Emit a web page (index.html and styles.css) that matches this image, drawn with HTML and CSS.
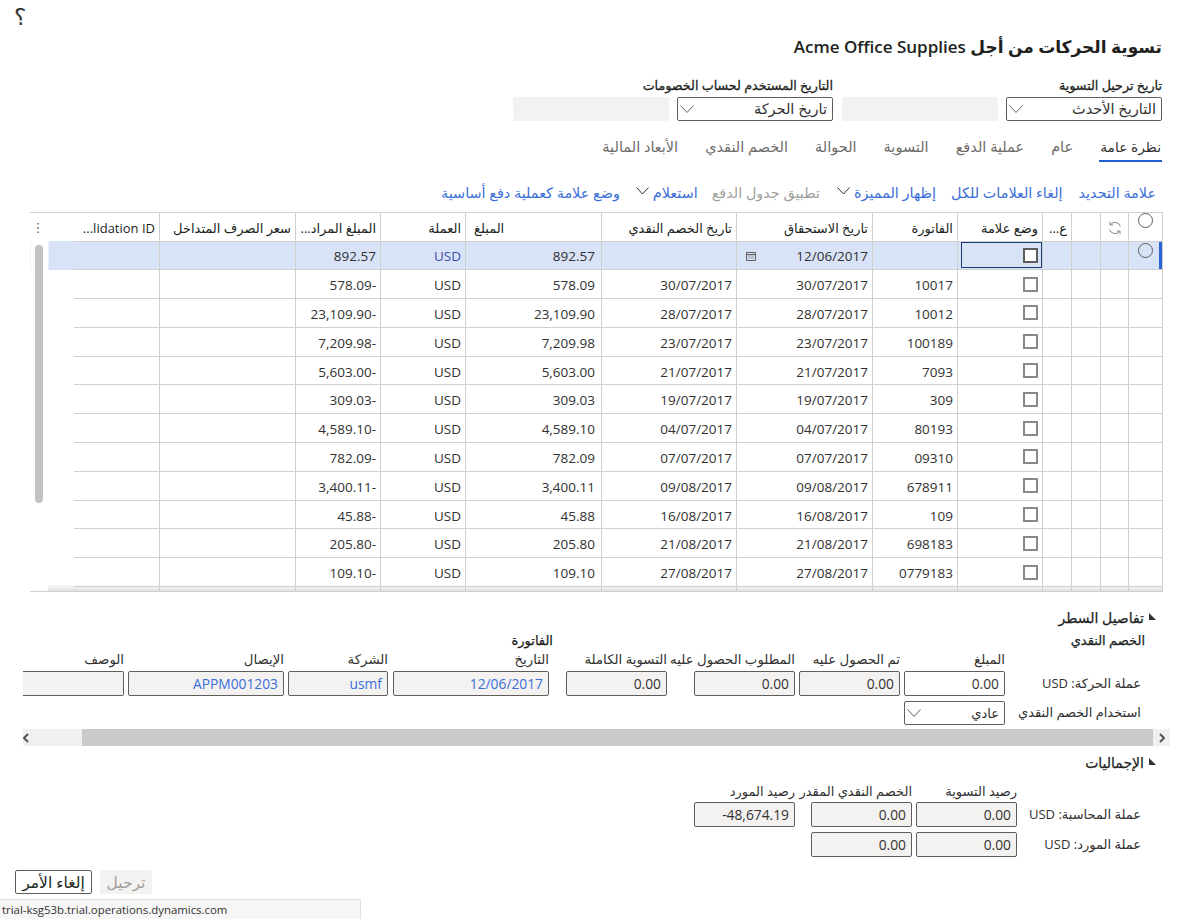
FILE: index.html
```html
<!DOCTYPE html>
<html lang="ar" dir="rtl">
<head>
<meta charset="utf-8">
<title>تسوية الحركات</title>
<link rel="stylesheet" href="styles.css">
</head>
<body>
<div class="help">؟</div>
<h1 class="title">تسوية الحركات من أجل Acme Office Supplies</h1>

<div class="top-form">
  <label class="top-label">تاريخ ترحيل التسوية</label>
  <label class="top-label">التاريخ المستخدم لحساب الخصومات</label>
  <div class="select"><span>التاريخ الأحدث</span><svg class="chev" viewBox="0 0 14 8"><path d="M.5.5L7 7.500 13.500.5"/></svg></div>
  <div class="blank"></div>
  <div class="select"><span>تاريخ الحركة</span><svg class="chev" viewBox="0 0 14 8"><path d="M.5.5L7 7.500 13.500.5"/></svg></div>
  <div class="blank"></div>
</div>

<nav class="tabs">
  <span class="tab active">نظرة عامة</span>
  <span class="tab">عام</span>
  <span class="tab">عملية الدفع</span>
  <span class="tab">التسوية</span>
  <span class="tab">الحوالة</span>
  <span class="tab">الخصم النقدي</span>
  <span class="tab">الأبعاد المالية</span>
</nav>

<div class="toolbar">
  <span class="act a1">علامة التحديد</span>
  <span class="act a2">إلغاء العلامات للكل</span>
  <span class="act a3">إظهار المميزة<svg class="tchev" viewBox="0 0 13 8"><path d="M.5.5l6 6.500 6-6.500"/></svg></span>
  <span class="act a4 off">تطبيق جدول الدفع</span>
  <span class="act a5">استعلام<svg class="tchev" viewBox="0 0 13 8"><path d="M.5.5l6 6.500 6-6.500"/></svg></span>
  <span class="act">وضع علامة كعملية دفع أساسية</span>
</div>

<div class="grid-wrap">
  <table class="grid">
    <colgroup>
      <col class="c34"><col class="c28"><col class="c29"><col class="c29"><col class="c85"><col class="c85"><col class="c136"><col class="c135"><col class="c136"><col class="c85"><col class="c85"><col class="c136"><col class="c86"><col class="c44">
    </colgroup>
    <thead>
      <tr>
        <th class="ctr"><span class="radio up"></span></th>
        <th class="ctr"><svg class="sync" viewBox="0 0 16 16"><path d="M13.5 6.5A5.800 5.800 0 0 0 3.400 4.600M2.500 9.500a5.800 5.800 0 0 0 10.100 1.900"/><path d="M3 1.800v3.100h3.100M13 14.200v-3.100H9.900"/></svg></th>
        <th></th>
        <th>ع...</th>
        <th>وضع علامة</th>
        <th>الفاتورة</th>
        <th>تاريخ الاستحقاق</th>
        <th>تاريخ الخصم النقدي</th>
        <th class="lft">المبلغ</th>
        <th>العملة</th>
        <th>المبلغ المراد...</th>
        <th>سعر الصرف المتداخل</th>
        <th>lidation ID...</th>
        <th class="dots-cell"><span class="dots">⋮</span></th>
      </tr>
    </thead>
    <tbody>
      <tr class="sel">
        <td class="ctr mark"><span class="radio"></span></td><td></td><td></td><td></td>
        <td class="check focus"><span class="box big"></span></td><td></td>
        <td class="date"><svg class="cal" viewBox="0 0 10 10"><path d="M.5 1.500h9v8h-9z"/><path d="M.5 3.500h9M2.500 5h1M4.500 5h1M6.500 5h1M2.500 7h1M4.500 7h1M6.500 7h1"/></svg>12/06/2017</td><td></td>
        <td class="amt">892.57</td><td class="link">USD</td><td>892.57</td><td></td><td></td><td class="tail"></td>
      </tr>
      <tr><td></td><td></td><td></td><td></td><td class="check"><span class="box"></span></td><td>10017</td><td>30/07/2017</td><td>30/07/2017</td><td class="amt">578.09</td><td>USD</td><td>-578.09</td><td></td><td></td><td class="none"></td></tr>
      <tr><td></td><td></td><td></td><td></td><td class="check"><span class="box"></span></td><td>10012</td><td>28/07/2017</td><td>28/07/2017</td><td class="amt">23,109.90</td><td>USD</td><td>-23,109.90</td><td></td><td></td><td class="none"></td></tr>
      <tr><td></td><td></td><td></td><td></td><td class="check"><span class="box"></span></td><td>100189</td><td>23/07/2017</td><td>23/07/2017</td><td class="amt">7,209.98</td><td>USD</td><td>-7,209.98</td><td></td><td></td><td class="none"></td></tr>
      <tr><td></td><td></td><td></td><td></td><td class="check"><span class="box"></span></td><td>7093</td><td>21/07/2017</td><td>21/07/2017</td><td class="amt">5,603.00</td><td>USD</td><td>-5,603.00</td><td></td><td></td><td class="none"></td></tr>
      <tr><td></td><td></td><td></td><td></td><td class="check"><span class="box"></span></td><td>309</td><td>19/07/2017</td><td>19/07/2017</td><td class="amt">309.03</td><td>USD</td><td>-309.03</td><td></td><td></td><td class="none"></td></tr>
      <tr><td></td><td></td><td></td><td></td><td class="check"><span class="box"></span></td><td>80193</td><td>04/07/2017</td><td>04/07/2017</td><td class="amt">4,589.10</td><td>USD</td><td>-4,589.10</td><td></td><td></td><td class="none"></td></tr>
      <tr><td></td><td></td><td></td><td></td><td class="check"><span class="box"></span></td><td>09310</td><td>07/07/2017</td><td>07/07/2017</td><td class="amt">782.09</td><td>USD</td><td>-782.09</td><td></td><td></td><td class="none"></td></tr>
      <tr><td></td><td></td><td></td><td></td><td class="check"><span class="box"></span></td><td>678911</td><td>09/08/2017</td><td>09/08/2017</td><td class="amt">3,400.11</td><td>USD</td><td>-3,400.11</td><td></td><td></td><td class="none"></td></tr>
      <tr><td></td><td></td><td></td><td></td><td class="check"><span class="box"></span></td><td>109</td><td>16/08/2017</td><td>16/08/2017</td><td class="amt">45.88</td><td>USD</td><td>-45.88</td><td></td><td></td><td class="none"></td></tr>
      <tr><td></td><td></td><td></td><td></td><td class="check"><span class="box"></span></td><td>698183</td><td>21/08/2017</td><td>21/08/2017</td><td class="amt">205.80</td><td>USD</td><td>-205.80</td><td></td><td></td><td class="none"></td></tr>
      <tr><td></td><td></td><td></td><td></td><td class="check"><span class="box"></span></td><td>0779183</td><td>27/08/2017</td><td>27/08/2017</td><td class="amt">109.10</td><td>USD</td><td>-109.10</td><td></td><td></td><td class="none"></td></tr>
      <tr class="cut"><td></td><td></td><td></td><td></td><td></td><td></td><td></td><td></td><td></td><td></td><td></td><td></td><td></td><td class="none"></td></tr>
    </tbody>
  </table>
  <div class="vthumb"></div>
</div>

<section class="details">
  <div class="sec-head"><svg class="tri" viewBox="0 0 7 7"><path d="M0 0L7 7H0z"/></svg><span>تفاصيل السطر</span></div>
  <div class="detail-scroll">
    <div class="dgrid">
      <div class="group g-cash">الخصم النقدي</div>
      <div class="group g-inv">الفاتورة</div>

      <div class="hd s-amount">المبلغ</div>
      <div class="hd s-got">تم الحصول عليه</div>
      <div class="hd s-req">المطلوب الحصول عليه</div>
      <div class="hd s-full">التسوية الكاملة</div>
      <div class="hd s-date">التاريخ</div>
      <div class="hd s-co">الشركة</div>
      <div class="hd s-rec">الإيصال</div>
      <div class="hd s-desc">الوصف</div>

      <div class="rowlabel">عملة الحركة: USD</div>
      <div class="field edit s-amount">0.00</div>
      <div class="field s-got">0.00</div>
      <div class="field s-req">0.00</div>
      <div class="field s-full">0.00</div>
      <div class="field blue s-date">12/06/2017</div>
      <div class="field blue s-co">usmf</div>
      <div class="field blue s-rec">APPM001203</div>
      <div class="field s-desc clipped"></div>

      <div class="rowlabel r3">استخدام الخصم النقدي</div>
      <div class="select small s-amount r3"><span>عادي</span><svg class="chev" viewBox="0 0 14 8"><path d="M.5.5L7 7.500 13.500.5"/></svg></div>
    </div>
    <div class="hscroll">
      <div class="hend"><svg viewBox="0 0 6 10"><path d="M1 1l4 4-4 4"/></svg></div>
      <div class="hthumb"></div>
      <div class="hend wide"><svg viewBox="0 0 6 10"><path d="M5 1L1 5l4 4"/></svg></div>
    </div>
  </div>
</section>

<section class="totals">
  <div class="sec-head"><svg class="tri" viewBox="0 0 7 7"><path d="M0 0L7 7H0z"/></svg><span>الإجماليات</span></div>
  <div class="tgrid">
    <div></div>
    <div class="hd">رصيد التسوية</div>
    <div class="hd">الخصم النقدي المقدر</div>
    <div></div>
    <div class="hd">رصيد المورد</div>
    <div class="rowlabel">عملة المحاسبة: USD</div>
    <div class="field tall">0.00</div>
    <div class="field tall">0.00</div>
    <div></div>
    <div class="field tall ltr">-48,674.19</div>
    <div class="rowlabel">عملة المورد: USD</div>
    <div class="field tall">0.00</div>
    <div class="field tall">0.00</div>
  </div>
</section>

<footer class="buttons">
  <span class="btn">إلغاء الأمر</span>
  <span class="btn off">ترحيل</span>
</footer>

<div class="status">trial-ksg53b.trial.operations.dynamics.com</div>
</body>
</html>
```

FILE: styles.css
```css
* { box-sizing: border-box; }
html, body { margin: 0; height: 919px; overflow: hidden; }
body {
  font-family: "Open Sans", "DejaVu Sans", sans-serif;
  font-size: 13px;
  color: #323130;
  background: #fff;
  line-height: 18px;
}
.help {
  height: 26px;
  padding-top: 3px;
  direction: ltr;
  padding-left: 14px;
  font-size: 23px;
  line-height: 26px;
  color: #333;
}
.title {
  margin: 8px 24px 0 0;
  font-size: 17px;
  line-height: 26px;
  font-weight: 600;
  color: #201f1e;
}
.top-form {
  margin: 16px 24px 0 0;
  display: grid;
  grid-template-columns: 156px 156px 156px 156px;
  column-gap: 8.5px;
  justify-content: start;
  row-gap: 3px;
}
.top-label {
  grid-column: span 2;
  font-weight: 400;
  font-size: 12.700px;
  line-height: 18px;
  color: #201f1e;
  -webkit-text-stroke: .3px #201f1e;
}
.select {
  height: 24px;
  border: 1px solid #605e5c;
  border-radius: 2px;
  display: flex;
  align-items: center;
  justify-content: space-between;
  padding: 0 5px 0 2px;
  font-size: 14.5px;
  background: #fff;
}
.chev { width: 14px; height: 8px; fill: none; stroke: #605e5c; stroke-width: 1; flex: none; }
.blank { height: 24px; background: #f3f2f1; border-radius: 2px; }
.tabs { margin: 14px 24px 0 0; display: flex; height: 27px; color: #6d6b69; }
.tab { height: 27px; font-size: 14.5px; line-height: 24px; padding: 0 1px; margin-left: 25px; white-space: nowrap; }
.tab.active { color: #323130; border-bottom: 2px solid #1f5fcf; font-size: 13.800px; }
.toolbar {
  margin: 19px 30px 0 0;
  display: flex;
  height: 24px;
  color: #3a6ed8;
  font-size: 14.400px;
  line-height: 24px;
  white-space: nowrap;
}
.act { margin-left: 16px; display: flex; align-items: center; gap: 4px; }
.act.a2 { margin-left: 15px; }
.act.a3 { margin-left: 17px; }
.act.a4 { margin-left: 14px; }
.act.off { color: #a19f9d; }
.tchev { width: 13px; height: 8px; fill: none; stroke: #2a2a2a; stroke-width: 1; position: relative; top: -2px; flex: none; }

.grid-wrap {
  position: relative;
  margin: 7px 23px 0 0;
  width: 1133px;
  height: 380px;
  overflow: hidden;
  border-top: 1px solid #d2d0ce;
  border-bottom: 1px solid #d2d0ce;
}
.grid { border-collapse: collapse; table-layout: fixed; width: 1133px; }
.c34 { width: 34px; } .c28 { width: 28px; } .c29 { width: 29px; }
.c85 { width: 85px; } .c86 { width: 86px; } .c135 { width: 135px; }
.c136 { width: 136px; } .c44 { width: 44px; }
.grid th, .grid td {
  border: 1px solid #d2d0ce;
  padding: 0 4px;
  text-align: right;
  white-space: nowrap;
  overflow: hidden;
  font-weight: 400;
  vertical-align: middle;
}
.grid thead tr { height: 28px; }
.grid th { font-size: 13px; border-top: 0; color: #201f1e; padding-top: 2px; }
.grid tr > :nth-child(13) { border-left: 0; }
.grid tbody tr { height: 28.800px; }
.grid td { font-size: 13.500px; padding-top: 2px; }
.grid .amt { padding-right: 6px; }
.grid .ctr { text-align: center; padding: 0; vertical-align: top; }
.grid .lft { text-align: left; padding-left: 8px; }
.grid .dots-cell, .grid .none, .grid .tail { border: 0; padding: 0; }
.grid .dots-cell { text-align: right; padding-right: 29px; color: #605e5c; font-size: 13px; }
.dots { display: inline-block; width: 10px; text-align: center; }
.sel td { background: #d8e3f8; }
.grid .tail { background: linear-gradient(to left, #d8e3f8 26px, #fff 26px); }
.link { color: #3a4fa8; }
.grid .mark { box-shadow: inset -3px 0 0 #2b62d9; }
.radio {
  display: inline-block;
  width: 15px;
  height: 15px;
  border: 1px solid #605e5c;
  border-radius: 50%;
  margin-top: 1px;
}
.radio.up { margin-top: 0; }
.sync { width: 16px; height: 16px; margin-top: 7px; fill: none; stroke: #8a8886; stroke-width: 1; }
.grid .check { padding: 0 4px 0 0; }
.grid .focus { position: relative; }
.grid .focus::after {
  content: "";
  position: absolute;
  top: 0;
  bottom: 1px;
  left: 3px;
  right: 0;
  border: 1px solid #173a7a;
}
.box {
  display: block;
  width: 15px;
  height: 15px;
  border: 2px solid #8a8886;
  background: #fff;
}
.box.big { border-color: #605e5c; }
.date { position: relative; }
.cal { position: absolute; left: 9px; top: 9px; width: 10px; height: 10px; fill: none; stroke: #605e5c; stroke-width: 1; }
.cut td { height: 20px; }
.grid-wrap::after {
  content: "";
  position: absolute;
  right: 0;
  left: 18px;
  bottom: 0;
  height: 6px;
  background: linear-gradient(to bottom, rgba(225,225,225,.25), rgba(205,205,205,.6));
}
.vthumb {
  position: absolute;
  left: 5px;
  top: 32px;
  width: 8px;
  height: 258px;
  background: #c2c2c2;
  border-radius: 4px;
}

.sec-head {
  display: flex;
  align-items: flex-start;
  gap: 5px;
  font-size: 14px;
  line-height: 18px;
  padding-right: 30px;
  color: #201f1e;
  -webkit-text-stroke: .25px #201f1e;
}
.tri { width: 7px; height: 7px; margin-top: 4px; fill: #323130; }

.details { margin-top: 17px; }
.detail-scroll { margin: 0 16px 0 0; width: 1147px; overflow: hidden; }
.dgrid {
  display: grid;
  padding-right: 29px;
  grid-template-columns: 132px 101px 101px 101px 19px 101px 9px 156px 101px 156px 101px;
  grid-template-rows: 22px 21px 25px 29px;
  column-gap: 4px;
  margin-top: 1px;
  white-space: nowrap;
}
.group {
  font-size: 13px;
  line-height: 20px;
  grid-row: 1;
  margin-top: 2px;
  color: #201f1e;
  -webkit-text-stroke: .25px #201f1e;
}
.g-cash { grid-column: 1; margin-right: -4px; }
.g-inv { grid-column: 8; margin-right: -4px; }
.hd { font-size: 13.300px; line-height: 18px; color: #323130; white-space: nowrap; }
.dgrid .hd { grid-row: 2; }
.dgrid .field { grid-row: 3; }
.s-amount { grid-column: 2; }
.s-got { grid-column: 3; }
.s-req { grid-column: 4; }
.s-full { grid-column: 6; }
.s-date { grid-column: 8; }
.s-co { grid-column: 9; margin-right: 1px; }
.s-rec { grid-column: 10; }
.s-desc { grid-column: 11; }
.field {
  height: 25px;
  border: 1px solid #605e5c;
  border-radius: 2px;
  background: #f3f2f1;
  padding: 0 5px;
  line-height: 23px;
  font-size: 13.800px;
  color: #323130;
  text-align: right;
}
.field.edit { background: #fff; }
.field.blue { color: #3a6ed8; }
.field.clipped { border-left: 0; border-radius: 0 2px 2px 0; }
.field.ltr { direction: ltr; }
.rowlabel { font-size: 13px; line-height: 25px; white-space: nowrap; }
.dgrid .rowlabel { grid-column: 1; grid-row: 3; }
.dgrid .rowlabel.r3 { grid-row: 4; margin-top: 4px; }
.dgrid .select.r3 { grid-row: 4; height: 24px; margin-top: 5px; }
.select.small { font-size: 13px; }
.hscroll { margin-top: 4px; display: flex; height: 17px; }
.hend {
  width: 17px;
  background: #f0f0f0;
  display: flex;
  align-items: center;
  justify-content: center;
  flex: none;
}
.hend.wide { width: 59px; justify-content: flex-end; padding-right: 4px; }
.hend svg { width: 6px; height: 10px; fill: none; stroke: #555; stroke-width: 2; }
.hthumb { flex: 1; background: #cacaca; }

.totals { margin-top: 8px; }
.tgrid {
  display: grid;
  padding-right: 45px;
  grid-template-columns: 120px 101px 101px 8px 101px;
  column-gap: 4px;
  row-gap: 5px;
  grid-template-rows: 15px 25px 25px;
  margin-top: 10px;
  justify-content: start;
  white-space: nowrap;
}
.tgrid .hd { font-size: 13px; margin-bottom: -4px; }
.field.tall { height: 25px; }

.buttons { margin: 13px 0 0; padding-left: 15px; display: flex; gap: 8px; justify-content: flex-end; }
.btn {
  height: 24px;
  width: 77px;
  border: 1px solid #605e5c;
  border-radius: 2px;
  text-align: center;
  font-size: 15.500px;
  line-height: 22px;
  color: #201f1e;
  white-space: nowrap;
  order: 2;
}
.btn.off { width: 52px; background: #f3f2f1; border-color: #f3f2f1; color: #a19f9d; order: 1; }
.status {
  position: fixed;
  left: 0;
  bottom: 0;
  width: 361px;
  height: 20px;
  background: #f6f6f6;
  border-top: 1px solid #e0e0e0;
  border-right: 1px solid #e0e0e0;
  direction: ltr;
  font-size: 11.400px;
  line-height: 20px;
  padding-left: 2px;
  color: #333;
  white-space: nowrap;
}
```
